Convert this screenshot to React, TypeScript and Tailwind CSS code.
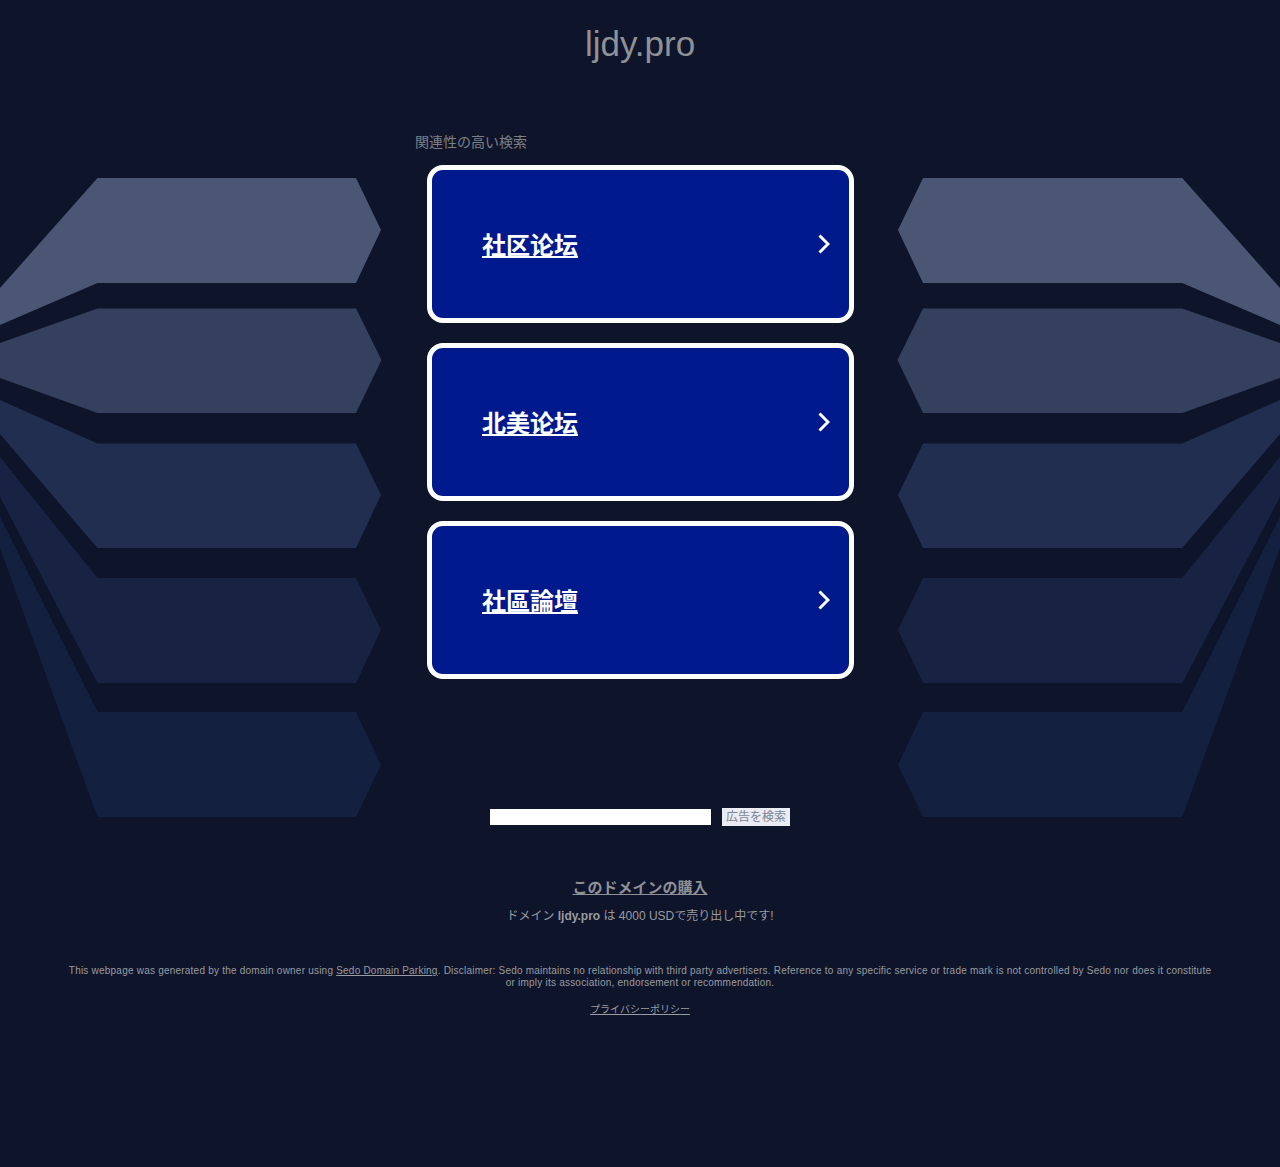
const SHAPES = [
  { fill: "#4a5673", left: "0,288 97.5,178 356,178 381,230 356,283 97.5,283 0,325" },
  { fill: "#35405f", left: "0,343 97.5,308.5 356,308.5 381.5,360 356,413 97.5,413 0,378" },
  { fill: "#222e4f", left: "0,400 97.5,443.5 356,443.5 381,495 356,548 97.5,548 0,434" },
  { fill: "#182343", left: "0,457 97.5,578 356,578 381,630 356,683 97.5,683 0,497" },
  { fill: "#142040", left: "0,517 97.5,712 356,712 381,765 356,817 97.5,817 0,548" },
];

const LINKS = ["社区论坛", "北美论坛", "社區論壇"];

function Backdrop() {
  return (
    <svg className="absolute left-0 top-0 h-[1167px] w-[1280px]" viewBox="0 0 1280 1167" aria-hidden="true">
      {SHAPES.map((s) => (
        <g key={s.fill} fill={s.fill}>
          <polygon points={s.left} />
          <polygon points={s.left} transform="translate(1280 0) scale(-1.0027 1)" />
        </g>
      ))}
    </svg>
  );
}

export default function App() {
  return (
    <div className="relative h-[1167px] w-full overflow-hidden bg-[#0e152a] font-['Liberation_Sans','Noto_Sans_CJK_JP',sans-serif]">
      <Backdrop />
      <div className="relative flex flex-col items-center">
        <h1 className="mt-[23px] text-[35px] leading-[42px] font-normal text-[#8f9196]">ljdy.pro</h1>

        <div className="mt-[68px] flex w-[450px] flex-col">
          <p className="text-sm leading-[18px] text-[#7c7f86]">関連性の高い検索</p>
          <div className="mt-[14px] flex flex-col items-center gap-[20px]">
            {LINKS.map((label) => (
              <a
                key={label}
                href="#"
                className="flex h-[158px] w-[427px] items-center justify-between rounded-[16px] border-[5px] border-white bg-[#00198c] pl-[50.5px] pr-[19px] text-white"
              >
                <span className="pt-1 text-2xl font-bold underline">{label}</span>
                <svg className="h-[20px] w-[12px]" viewBox="0 0 12 20" fill="none" stroke="currentColor" strokeWidth="3" aria-hidden="true">
                  <polyline points="1.5,1.5 10,10 1.5,18.5" />
                </svg>
              </a>
            ))}
          </div>
        </div>

        <form className="mt-[129px] flex w-[300px] items-center justify-between">
          <input className="h-[16px] w-[221px] bg-white" type="text" aria-label="search" />
          <button type="button" className="h-[18px] w-[68px] bg-[#e9ecf3] text-xs leading-[18px] text-[#7c8594]">
            広告を検索
          </button>
        </form>

        <a href="#" className="mt-[53px] text-[15px] leading-[18px] font-bold text-[#8f9196] underline">
          このドメインの購入
        </a>
        <p className="mt-[11px] text-xs leading-[16px] text-[#999ba1]">
          ドメイン <b>ljdy.pro</b> は 4000 USDで売り出し中です!
        </p>

        <div className="mt-[41px] w-[1152px] text-center text-[10px] leading-[12px] tracking-[0.22px] text-[#999ba1]">
          <p>
            This webpage was generated by the domain owner using{" "}
            <a href="#" className="underline">Sedo Domain Parking</a>
            . Disclaimer: Sedo maintains no relationship with third party advertisers. Reference to any specific service or trade mark is not controlled by Sedo nor does it constitute or imply its association, endorsement or recommendation.
          </p>
          <a href="#" className="mt-[15px] inline-block tracking-normal underline">プライバシーポリシー</a>
        </div>
      </div>
    </div>
  );
}
